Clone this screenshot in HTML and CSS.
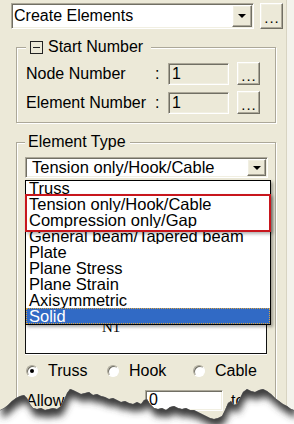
FILE: index.html
```html
<!DOCTYPE html>
<html lang="en">
<head>
  <meta charset="UTF-8" />
  <title>Create Elements</title>
  <link rel="stylesheet" href="styles.css">
</head>
<body>
  <div class="window">
    <div class="panel">
      <div class="top-row">
        <div class="combo combo-main">
          <span class="combo-text">Create Elements</span>
          <span class="drop-btn"><span class="arrow"></span></span>
        </div>
        <button class="btn more-btn">...</button>
      </div>

      <div class="group start-group">
        <div class="group-title"><span class="collapse-box"></span>Start Number</div>
        <div class="field-row">
          <span class="field-label">Node Number</span><span class="colon">:</span>
          <div class="textbox readonly">1</div>
          <button class="btn small-btn">...</button>
        </div>
        <div class="field-row">
          <span class="field-label">Element Number</span><span class="colon">:</span>
          <div class="textbox readonly">1</div>
          <button class="btn small-btn">...</button>
        </div>
      </div>

      <div class="group type-group">
        <div class="group-title">Element Type</div>
        <div class="combo-wrap">
          <div class="combo combo-type">
            <span class="combo-text">Tension only/Hook/Cable</span>
            <span class="drop-btn"><span class="arrow"></span></span>
          </div>
          <div class="dropdown-list">
            <div class="list-item first">Truss</div>
            <div class="list-item">Tension only/Hook/Cable</div>
            <div class="list-item">Compression only/Gap</div>
            <div class="list-item">General beam/Tapered beam</div>
            <div class="list-item">Plate</div>
            <div class="list-item">Plane Stress</div>
            <div class="list-item">Plane Strain</div>
            <div class="list-item">Axisymmetric</div>
            <div class="list-item selected">Solid</div>
            <div class="mark-box"></div>
          </div>
        </div>
        <div class="preview">
          <span class="node-label">N1</span>
        </div>
        <div class="radio-row">
          <label class="radio-opt opt-truss"><span class="radio checked"></span>Truss</label>
          <label class="radio-opt opt-hook"><span class="radio"></span>Hook</label>
          <label class="radio-opt"><span class="radio"></span>Cable</label>
        </div>
        <div class="allow-row">
          <span class="allow-label">Allow</span>
          <div class="textbox allow-box">0</div>
          <span class="allow-to">to</span>
        </div>
      </div>
    </div>

    <!-- torn paper edge over the bottom of the screenshot -->
    <svg class="torn-edge" width="294" height="424" viewBox="0 0 294 424">
      <defs>
        <clipPath id="below">
          <polygon points="0,410 4,408 8,405 12,401 16,398 20,396 24,395 27,398 30,404 33,408 37,409 41,408 45,410 49,409 53,408 57,409 61,406 64,400 67,393 70,389 73,390 77,392 81,394 85,393 89,392 93,395 97,394 101,396 105,397 109,399 113,398 117,400 121,402 125,401 129,403 133,404 137,402 141,404 144,400 147,399 150,404 154,408 158,409 162,408 166,410 170,407 174,406 178,408 182,409 186,408 190,410 194,410 198,412 202,414 206,416 210,418 214,419 218,418 222,416 225,410 228,403 231,401 234,405 237,404 240,398 243,392 247,389 251,391 255,392 259,390 263,389 267,391 271,394 275,398 279,401 283,404 287,406 291,409 294,410 294,424 0,424" />
        </clipPath>
        <filter id="soft" x="-10%" y="-10%" width="120%" height="130%">
          <feGaussianBlur stdDeviation="3.5" />
        </filter>
      </defs>
      <g clip-path="url(#below)">
        <rect x="0" y="380" width="294" height="44" fill="#fff" />
        <polygon filter="url(#soft)" fill="#3c3c3c" transform="translate(2,8)" points="0,0 294,0 294,410 291,409 287,406 283,404 279,401 275,398 271,394 267,391 263,389 259,390 255,392 251,391 247,389 243,392 240,398 237,404 234,405 231,401 228,403 225,410 222,416 218,418 214,419 210,418 206,416 202,414 198,412 194,410 190,410 186,408 182,409 178,408 174,406 170,407 166,410 162,408 158,409 154,408 150,404 147,399 144,400 141,404 137,402 133,404 129,403 125,401 121,402 117,400 113,398 109,399 105,397 101,396 97,394 93,395 89,392 85,393 81,394 77,392 73,390 70,389 67,393 64,400 61,406 57,409 53,408 49,409 45,410 41,408 37,409 33,408 30,404 27,398 24,395 20,396 16,398 12,401 8,405 4,408 0,410" />
        <polyline fill="none" stroke="#555" stroke-width="1" points="0,410 4,408 8,405 12,401 16,398 20,396 24,395 27,398 30,404 33,408 37,409 41,408 45,410 49,409 53,408 57,409 61,406 64,400 67,393 70,389 73,390 77,392 81,394 85,393 89,392 93,395 97,394 101,396 105,397 109,399 113,398 117,400 121,402 125,401 129,403 133,404 137,402 141,404 144,400 147,399 150,404 154,408 158,409 162,408 166,410 170,407 174,406 178,408 182,409 186,408 190,410 194,410 198,412 202,414 206,416 210,418 214,419 218,418 222,416 225,410 228,403 231,401 234,405 237,404 240,398 243,392 247,389 251,391 255,392 259,390 263,389 267,391 271,394 275,398 279,401 283,404 287,406 291,409 294,410" />
      </g>
    </svg>
  </div>
</body>
</html>
```

FILE: styles.css
```css
body {
  margin: 0;
  background: #f4f3ec;
  font-family: "Liberation Sans", Arial, sans-serif;
  font-size: 16px;
  color: #000;
}
.window {
  position: relative;
  width: 294px;
  height: 424px;
  overflow: hidden;
}
.panel {
  width: 287px;
  height: 424px;
  box-sizing: border-box;
  background: #ece9d8;
  border-right: 1px solid #d8d4c2;
  overflow: hidden;
}
.top-row {
  display: flex;
  gap: 6px;
  padding: 3px 0 0 11px;
}
.combo {
  box-sizing: border-box;
  display: flex;
  align-items: center;
  justify-content: space-between;
  padding: 1px;
  background: #fff;
  border: 1px solid;
  border-color: #aca899 #fff #fff #aca899;
  box-shadow: inset 1px 1px 0 #716f64, inset -1px -1px 0 #f1efe2;
}
.combo-main {
  width: 243px;
  height: 26px;
}
.combo-main .combo-text {
  padding-left: 1px;
}
.combo-main .drop-btn {
  width: 20px;
  height: 22px;
}
.combo-type {
  width: 243px;
  height: 21px;
}
.combo-type .combo-text {
  padding-left: 5px;
  font-size: 16.5px;
}
.combo-type .drop-btn {
  width: 19px;
  height: 17px;
}
.drop-btn,
.btn {
  box-sizing: border-box;
  display: flex;
  align-items: center;
  justify-content: center;
  background: #ece9d8;
  border: 1px solid;
  border-color: #fff #716f64 #716f64 #fff;
  box-shadow: inset -1px -1px 0 #aca899, inset 1px 1px 0 #f1efe2;
}
.arrow {
  width: 0;
  height: 0;
  border-left: 4px solid transparent;
  border-right: 4px solid transparent;
  border-top: 4px solid #000;
}
.btn {
  padding: 0;
  font-family: inherit;
  font-size: 15px;
  letter-spacing: 1px;
  line-height: 16px;
  color: #000;
}
.more-btn {
  width: 23px;
  height: 26px;
  padding: 4px 0 0 1px;
}
.small-btn {
  width: 23px;
  height: 23px;
  margin-left: 8px;
  padding: 4px 0 0 1px;
}

/* group boxes */
.group {
  box-sizing: border-box;
  width: 260px;
  margin-left: 16px;
  border: 1px solid #aca899;
  box-shadow: inset 1px 1px 0 #fff, 1px 1px 0 #fff;
}
.group-title {
  display: flex;
  align-items: center;
  width: max-content;
  height: 18px;
  margin-top: -10px;
  background: #ece9d8;
}
.start-group {
  margin-top: 18px;
  padding: 0 9px 8px;
}
.start-group .group-title {
  padding: 0 8px 0 4px;
}
.collapse-box {
  position: relative;
  box-sizing: border-box;
  width: 13px;
  height: 13px;
  margin-right: 5px;
  border: 1px solid #222;
}
.collapse-box::after {
  content: "";
  position: absolute;
  left: 2px;
  right: 2px;
  top: 5px;
  height: 1px;
  background: #222;
}
.field-row {
  display: flex;
  align-items: center;
  margin-top: 6px;
}
.field-label {
  width: 129px;
}
.colon {
  width: 13px;
}
.textbox {
  box-sizing: border-box;
  height: 22px;
  padding: 0 3px;
  line-height: 19px;
  background: #fff;
  border: 1px solid;
  border-color: #aca899 #fff #fff #aca899;
  box-shadow: inset 1px 1px 0 #716f64, inset -1px -1px 0 #f1efe2;
}
.textbox.readonly {
  width: 61px;
  background: #ece9d8;
}

.type-group {
  margin-top: 19px;
  padding: 0 8px 40px;
}
.type-group .group-title {
  padding: 0 4px 0 3px;
}
.combo-wrap {
  position: relative;
  margin-top: 6px;
}
.dropdown-list {
  position: absolute;
  top: 23px;
  left: 0;
  z-index: 2;
  box-sizing: border-box;
  width: 246px;
  height: 145px;
  background: #fff;
  border: 1px solid #000;
  box-shadow: 2px 2px 3px rgba(0, 0, 0, 0.35);
}
.list-item {
  height: 16px;
  padding-left: 3px;
  font-size: 16.5px;
  line-height: 16px;
  white-space: nowrap;
  overflow: hidden;
}
.list-item.first {
  margin-top: -1px;
}
.list-item.selected {
  box-sizing: border-box;
  background: #316ac5;
  color: #fff;
  border: 1px dotted #d9a441;
  padding-left: 2px;
  line-height: 14px;
}
.mark-box {
  position: absolute;
  top: 13px;
  left: -1px;
  width: 242px;
  height: 34px;
  border: 2px solid #c8161d;
  box-shadow: 2px 2px 3px rgba(0, 0, 0, 0.3);
}
.preview {
  position: relative;
  box-sizing: border-box;
  height: 173px;
  margin-top: 3px;
  background: #fff;
  border: 1px solid #111;
  box-shadow: 0 1px 0 #fff;
}
.node-label {
  position: absolute;
  left: 76px;
  top: 138px;
  font-family: "Liberation Serif", "Times New Roman", serif;
  font-size: 15px;
  line-height: 1;
}
.radio-row {
  display: flex;
  align-items: center;
  height: 18px;
  margin-top: 8px;
  padding-left: 1px;
}
.radio-opt {
  display: flex;
  align-items: center;
  gap: 10px;
}
.opt-truss {
  width: 81px;
}
.opt-hook {
  width: 86px;
}
.radio {
  position: relative;
  box-sizing: border-box;
  width: 12px;
  height: 12px;
  border-radius: 50%;
  background: #fff;
  border: 1px solid;
  border-color: #aca899 #fff #fff #aca899;
  box-shadow: inset 1px 1px 0 #716f64;
}
.radio.checked::after {
  content: "";
  position: absolute;
  left: 3px;
  top: 3px;
  width: 4px;
  height: 4px;
  border-radius: 50%;
  background: #000;
}
.allow-row {
  display: flex;
  align-items: center;
  margin-top: 10px;
  padding-left: 1px;
}
.allow-label {
  width: 119px;
  white-space: nowrap;
}
.allow-box {
  width: 78px;
  height: 21px;
  line-height: 18px;
}
.allow-to {
  margin-left: 8px;
}
.torn-edge {
  position: absolute;
  top: 0;
  left: 0;
  pointer-events: none;
}
```
